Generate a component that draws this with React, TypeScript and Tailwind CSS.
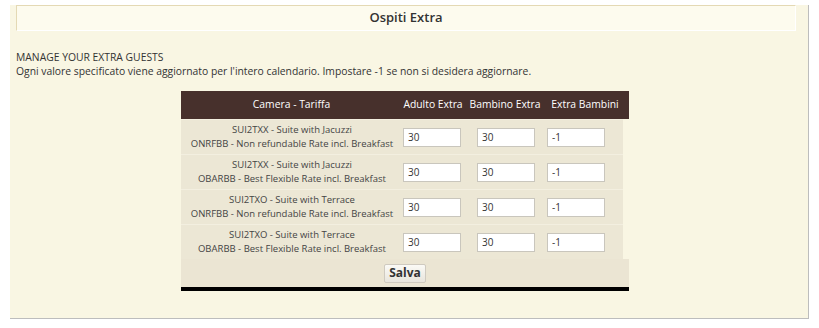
import React from "react";

const rows = [
  { room: "SUI2TXX - Suite with Jacuzzi", rate: "ONRFBB - Non refundable Rate incl. Breakfast" },
  { room: "SUI2TXX - Suite with Jacuzzi", rate: "OBARBB - Best Flexible Rate incl. Breakfast" },
  { room: "SUI2TXO - Suite with Terrace", rate: "ONRFBB - Non refundable Rate incl. Breakfast" },
  { room: "SUI2TXO - Suite with Terrace", rate: "OBARBB - Best Flexible Rate incl. Breakfast" },
];

function ValueInput({ value }: { value: string }) {
  return (
    <input
      type="text"
      defaultValue={value}
      className="h-[19px] w-[58px] border border-[#c9c6bd] bg-white pl-[4px] text-[10px] text-[#333] outline-none"
    />
  );
}

export default function App() {
  return (
    <div className="bg-white pl-[10px] pt-[5px] font-['Open_Sans',sans-serif] text-[#333]">
      <div className="h-[314px] w-[799px] border-b border-r border-[#bdbdbd] bg-[#f9f6e3]">
        <div className="ml-[6px] flex h-[26px] w-[780px] items-center justify-center border-l border-t border-[#e4d9b4] border-b-white border-r-white border-b border-r bg-[#fdfbee]">
          <h1 className="text-[13px] font-semibold text-[#333]">Ospiti Extra</h1>
        </div>

        <div className="ml-[6px] mt-[19px] whitespace-nowrap text-[10.35px] leading-[14px]">
          <p>MANAGE YOUR EXTRA GUESTS</p>
          <p>Ogni valore specificato viene aggiornato per l'intero calendario. Impostare -1 se non si desidera aggiornare.</p>
        </div>

        <div className="ml-[171px] mt-[13px] w-[448px]">
          <div className="flex h-[28px] items-center whitespace-nowrap bg-[#47302c] text-[10.35px] text-white">
            <div className="w-[221px] text-center">Camera - Tariffa</div>
            <div className="w-[62px] text-center">Adulto Extra</div>
            <div className="w-[82px] text-center">Bambino Extra</div>
            <div className="w-[78px] text-center">Extra Bambini</div>
          </div>

          {rows.map((r, i) => (
            <div
              key={i}
              className="flex h-[35px] w-[442px] items-center whitespace-nowrap border-t border-[#f3efe0] bg-[#ece7d5] text-[9.5px] leading-[14px] first:border-t-0"
            >
              <div className="w-[222px] text-center text-[#444]">
                <div>{r.room}</div>
                <div>{r.rate}</div>
              </div>
              <ValueInput value="30" />
              <div className="w-[16px]" />
              <ValueInput value="30" />
              <div className="w-[12px]" />
              <ValueInput value="-1" />
            </div>
          ))}

          <div className="flex h-[28px] items-center justify-center bg-[#ebe5d3]">
            <button className="h-[19px] rounded-[2px] border border-[#cfcac0] bg-gradient-to-b from-[#fbfaf6] to-[#e8e5dc] px-[4px] text-[12px] font-bold leading-[16px] text-[#333]">
              Salva
            </button>
          </div>
          <div className="h-[4px] bg-black" />
        </div>
      </div>
    </div>
  );
}
